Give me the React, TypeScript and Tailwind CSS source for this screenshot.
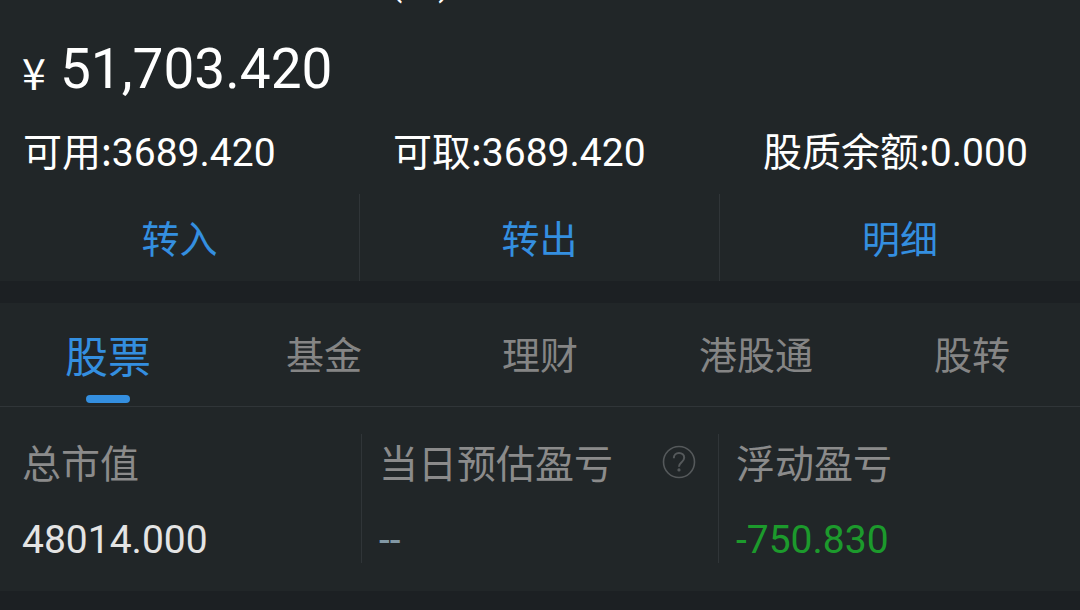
import React from "react";

const balances = [
  { label: "可用", value: "3689.420" },
  { label: "可取", value: "3689.420" },
  { label: "股质余额", value: "0.000" },
];

const actions = ["转入", "转出", "明细"];

const tabs = ["股票", "基金", "理财", "港股通", "股转"];

function HelpIcon() {
  return (
    <svg viewBox="0 0 34 34" className="h-[34px] w-[34px]" fill="none" stroke="#55595b" aria-hidden="true">
      <circle cx="17" cy="17" r="15.5" strokeWidth="1.6" />
      <path d="M11.8 13.2c0-3.2 2.2-5.2 5.2-5.2s5.2 2 5.2 4.7c0 2.3-1.3 3.4-2.9 4.8-1.4 1.2-2.3 2.1-2.3 4.2" strokeWidth="2" />
      <circle cx="17" cy="24.9" r="1.6" fill="#55595b" stroke="none" />
    </svg>
  );
}

export default function App() {
  return (
    <main className="min-h-screen bg-[#1c2023] font-['Roboto','Noto_Sans_CJK_SC',sans-serif] text-[39px] leading-[46px] text-white">
      <section className="bg-[#212628]">
        <div className="flex h-[31px] items-end overflow-hidden pl-[390px]">
          <h1 className="h-[71px] text-[36px]">(元)</h1>
        </div>
        <p className="flex items-end gap-[14px] px-[22px]">
          <span className="font-['Noto_Sans_CJK_SC',sans-serif] text-[43px] leading-[72px]">¥</span>
          <span className="text-[55px] leading-[76px]">51,703.420</span>
        </p>
        <dl className="grid grid-cols-[370fr_370fr_340fr] pt-[19px] pb-[18px]">
          {balances.map((item) => (
            <div key={item.label} className="flex items-baseline pl-[23px] whitespace-nowrap">
              <dt className="font-['Noto_Sans_CJK_SC',sans-serif]">{item.label}:</dt>
              <dd>{item.value}</dd>
            </div>
          ))}
        </dl>
        <div className="grid grid-cols-3 divide-x divide-[#303538]">
          {actions.map((action) => (
            <button key={action} type="button" className="h-[87px] pt-1 text-[38px] text-[#348fe0]">
              {action}
            </button>
          ))}
        </div>
      </section>

      <section className="mt-[22px] bg-[#212628]">
        <div role="tablist" className="grid h-[104px] grid-cols-5 border-b border-[#303538]">
          {tabs.map((tab, index) => (
            <button
              key={tab}
              type="button"
              role="tab"
              aria-selected={index === 0}
              className={
                index === 0
                  ? "flex flex-col items-center justify-end gap-[14px] pb-[3px] text-[43px] text-[#348fe0]"
                  : "pt-0.5 text-[38px] text-[#858585]"
              }
            >
              {tab}
              {index === 0 && <span className="h-2 w-11 rounded-full bg-[#348fe0]" />}
            </button>
          ))}
        </div>
        <dl className="grid grid-cols-[362fr_357fr_361fr] divide-x divide-[#303538] pt-[27px] pb-7">
          <div className="h-[129px] pt-2 pl-[22px]">
            <dt className="text-[#8b8b8b]">总市值</dt>
            <dd className="pt-[29px] text-[#e4e4e4]">48014.000</dd>
          </div>
          <div className="h-[129px] pt-2 pl-[17px]">
            <dt className="flex justify-between pr-[22px] text-[#8b8b8b]">
              当日预估盈亏
              <button type="button" className="h-10" aria-label="当日预估盈亏说明">
                <HelpIcon />
              </button>
            </dt>
            <dd className="pt-[29px] text-[#8298a5]">--</dd>
          </div>
          <div className="h-[129px] pt-2 pl-[17px]">
            <dt className="text-[#8b8b8b]">浮动盈亏</dt>
            <dd className="pt-[29px] text-[#1c9a2c]">-750.830</dd>
          </div>
        </dl>
      </section>
    </main>
  );
}
